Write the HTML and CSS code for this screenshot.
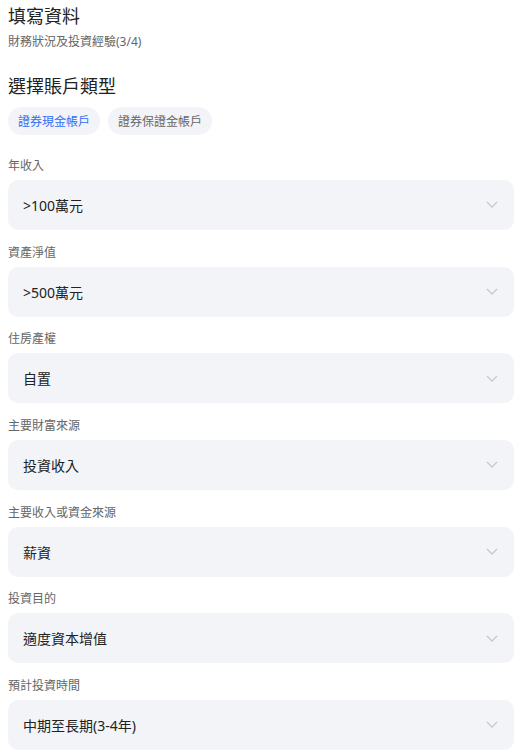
FILE: index.html
```html
<!DOCTYPE html>
<html lang="zh-Hant">
<head>
<meta charset="utf-8">
<title>填寫資料</title>
<link rel="stylesheet" href="styles.css">
</head>
<body>
<div class="page">
  <h1 class="title">填寫資料</h1>
  <p class="subtitle">財務狀況及投資經驗(3/4)</p>
  <h2 class="section-title">選擇賬戶類型</h2>
  <div class="chips">
    <span class="chip chip-active">證券現金帳戶</span>
    <span class="chip">證券保證金帳戶</span>
  </div>
  <div class="form">
    <div class="field"><div class="label">年收入</div><div class="select"><span>&gt;100萬元</span><svg class="chev" viewBox="0 0 12 7"><path d="M1 1l5 5 5-5"/></svg></div></div>
    <div class="field"><div class="label">資產淨值</div><div class="select"><span>&gt;500萬元</span><svg class="chev" viewBox="0 0 12 7"><path d="M1 1l5 5 5-5"/></svg></div></div>
    <div class="field"><div class="label">住房產權</div><div class="select"><span>自置</span><svg class="chev" viewBox="0 0 12 7"><path d="M1 1l5 5 5-5"/></svg></div></div>
    <div class="field"><div class="label">主要財富來源</div><div class="select"><span>投資收入</span><svg class="chev" viewBox="0 0 12 7"><path d="M1 1l5 5 5-5"/></svg></div></div>
    <div class="field"><div class="label">主要收入或資金來源</div><div class="select"><span>薪資</span><svg class="chev" viewBox="0 0 12 7"><path d="M1 1l5 5 5-5"/></svg></div></div>
    <div class="field"><div class="label">投資目的</div><div class="select"><span>適度資本增值</span><svg class="chev" viewBox="0 0 12 7"><path d="M1 1l5 5 5-5"/></svg></div></div>
    <div class="field"><div class="label">預計投資時間</div><div class="select"><span>中期至長期(3-4年)</span><svg class="chev" viewBox="0 0 12 7"><path d="M1 1l5 5 5-5"/></svg></div></div>
  </div>
</div>
</body>
</html>
```
FILE: styles.css
```css
* { box-sizing: border-box; }
html, body { margin: 0; padding: 0; background: #fff; }
body {
  font-family: "Noto Sans", "Noto Sans CJK TC", sans-serif;
  color: #222;
}
.page { padding: 4px 2px 0 8px; }
.title {
  margin: 0;
  font-size: 18px;
  line-height: 24px;
  font-weight: 400;
  color: #222;
}
.subtitle {
  margin: 5px 0 0;
  font-size: 12px;
  line-height: 18px;
  color: #666;
}
.section-title {
  margin: 23px 0 0;
  font-size: 18px;
  line-height: 24px;
  font-weight: 400;
  color: #222;
}
.chips {
  display: flex;
  gap: 8px;
  margin-top: 9px;
  margin-bottom: 8.33px;
}
.chip {
  display: inline-flex;
  align-items: center;
  height: 28px;
  padding: 0 10px;
  border-radius: 14px;
  background: #f3f4f8;
  font-size: 12px;
  color: #666;
}
.chip-active { color: #2f6ff5; }
.field { padding-top: 13.67px; }
.label {
  font-size: 12px;
  line-height: 18px;
  color: #666;
  margin-bottom: 5px;
}
.select {
  height: 50px;
  background: #f3f4f8;
  border-radius: 10px;
  display: flex;
  align-items: center;
  justify-content: space-between;
  padding: 0 16px 0 15px;
  font-size: 14px;
  color: #222;
}
.chev {
  width: 12px;
  height: 7px;
  fill: none;
  stroke: #c6c8cc;
  stroke-width: 1.3;
}
```
